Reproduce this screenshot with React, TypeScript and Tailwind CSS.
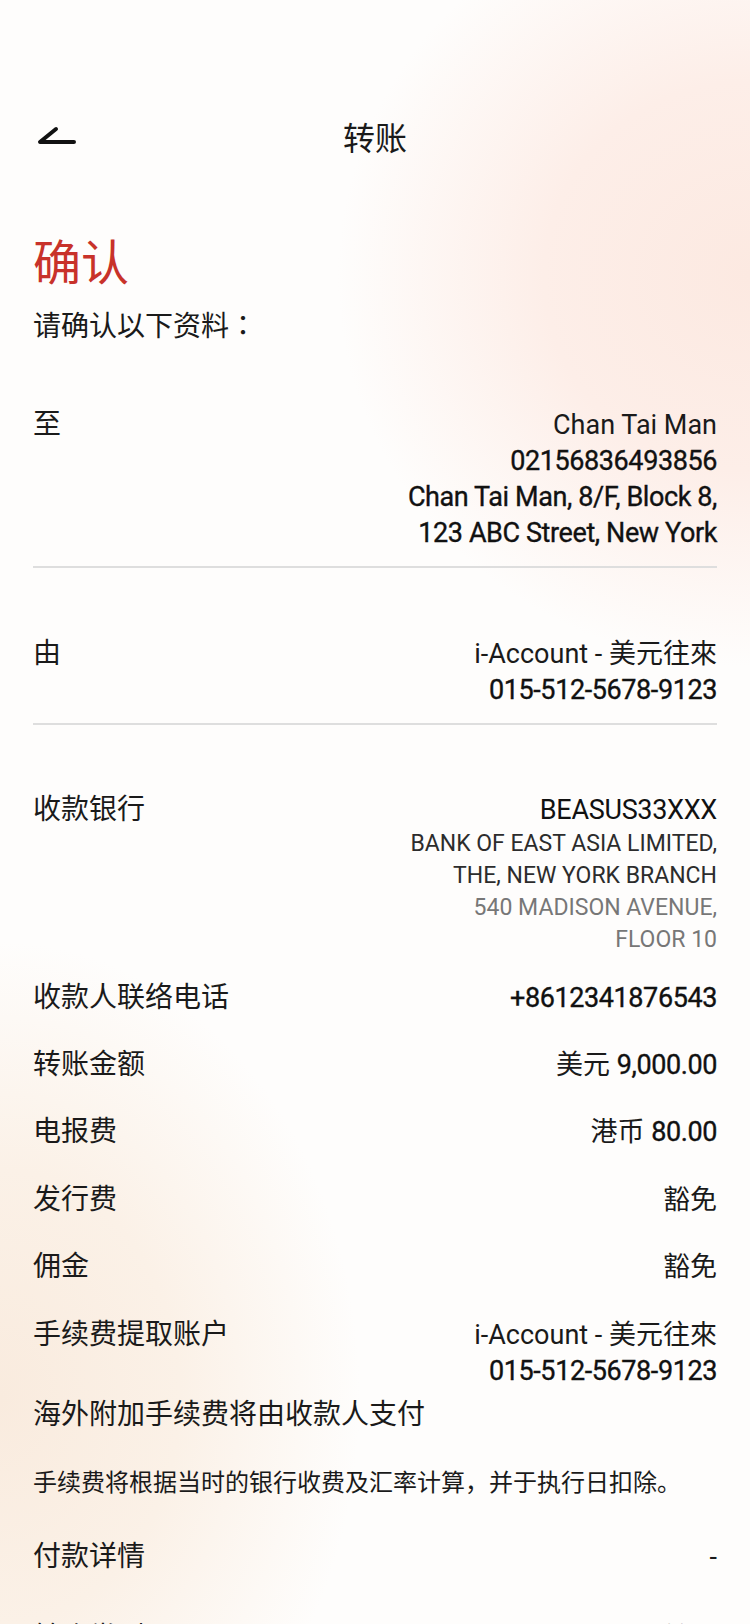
import React from "react";

const latin = "font-['Roboto','Noto_Sans_CJK_SC',sans-serif]";

function Row({ label, children, className = "" }: { label: string; children: React.ReactNode; className?: string }) {
  return (
    <div className={`flex justify-between items-start ${className}`}>
      <div className="text-[28px] leading-[36px] text-[#1a1a1a] shrink-0">{label}</div>
      <div className={`text-right text-[27px] leading-[36px] text-[#1a1a1a] ${latin}`}>{children}</div>
    </div>
  );
}

function Num({ children }: { children: React.ReactNode }) {
  return <span className="tracking-[-0.4px] text-[#111] [-webkit-text-stroke:0.35px_#111]">{children}</span>;
}

export default function App() {
  return (
    <div
      className="relative w-[750px] h-[1624px] overflow-hidden bg-[#fefdfc] bg-[radial-gradient(ellipse_55%_24%_at_100%_17%,#fce9e1_0%,#fdeee8_50%,rgba(253,240,235,0)_100%),radial-gradient(ellipse_48%_28%_at_0%_86%,#f9ebde_0%,#fbf1e7_50%,rgba(251,243,234,0)_100%)] font-['Roboto','Noto_Sans_CJK_SC',sans-serif] text-[#1a1a1a]"
    >
      {/* header */}
      <div className="pt-[112px] px-[33px] grid grid-cols-[1fr_auto_1fr] items-center h-[160px]">
        <div className="flex items-center">
          <svg width="40" height="24" viewBox="0 0 40 24" className="mt-[2px] ml-[3px]">
            <path d="M20 4 L4 17 L38 17" fill="none" stroke="#111" strokeWidth="4" strokeLinecap="round" strokeLinejoin="round" />
          </svg>
        </div>
        <div className="text-[32px] leading-[48px] font-['Noto_Sans_CJK_SC',sans-serif]">转账</div>
        <div />
      </div>

      <div className="px-[33px]">
        <div className="mt-[71px] text-[48px] leading-[56px] text-[#c8322a] font-['Noto_Sans_CJK_SC',sans-serif]">确认</div>
        <div className="mt-[17px] text-[28px] leading-[40px] font-['Noto_Sans_CJK_TC',sans-serif]">请确认以下资料：</div>

        <Row label="至" className="mt-[63px]">
          <div>Chan Tai Man</div>
          <div><Num>02156836493856</Num></div>
          <div><Num>Chan Tai Man, 8/F, Block 8,</Num></div>
          <div><Num>123 ABC Street, New York</Num></div>
        </Row>
        <div className="mt-[15px] h-[2px] bg-[#dedede]" />

        <Row label="由" className="mt-[68px]">
          <div>i-Account - 美元往來</div>
          <div><Num>015-512-5678-9123</Num></div>
        </Row>
        <div className="mt-[15px] h-[2px] bg-[#dedede]" />

        <div className="mt-[67px] flex justify-between items-start">
          <div className="text-[28px] leading-[36px]">收款银行</div>
          <div className={`text-right ${latin}`}>
            <div className="text-[27px] leading-[36px] tracking-[-0.3px] text-[#111]">BEASUS33XXX</div>
            <div className="text-[23px] leading-[32px] text-[#2c2c2c]">BANK OF EAST ASIA LIMITED,</div>
            <div className="text-[23px] leading-[32px] text-[#2c2c2c]">THE, NEW YORK BRANCH</div>
            <div className="text-[23px] leading-[32px] text-[#777777]">540 MADISON AVENUE,</div>
            <div className="text-[23px] leading-[32px] text-[#777777]">FLOOR 10</div>
          </div>
        </div>

        <Row label="收款人联络电话" className="mt-[24px]"><Num>+8612341876543</Num></Row>
        <Row label="转账金额" className="mt-[31px]">美元 <Num>9,000.00</Num></Row>
        <Row label="电报费" className="mt-[31px]">港币 <Num>80.00</Num></Row>
        <Row label="发行费" className="mt-[32px]">豁免</Row>
        <Row label="佣金" className="mt-[31px]">豁免</Row>
        <Row label="手续费提取账户" className="mt-[32px]">
          <div>i-Account - 美元往來</div>
          <div><Num>015-512-5678-9123</Num></div>
        </Row>

        <div className="mt-[8px] text-[28px] leading-[36px]">海外附加手续费将由收款人支付</div>
        <div className="mt-[33px] text-[24px] leading-[34px]">手续费将根据当时的银行收费及汇率计算，并于执行日扣除。</div>

        <Row label="付款详情" className="mt-[39px]">-</Row>
        <Row label="转账类型" className="mt-[45px]">转账</Row>
      </div>
    </div>
  );
}
